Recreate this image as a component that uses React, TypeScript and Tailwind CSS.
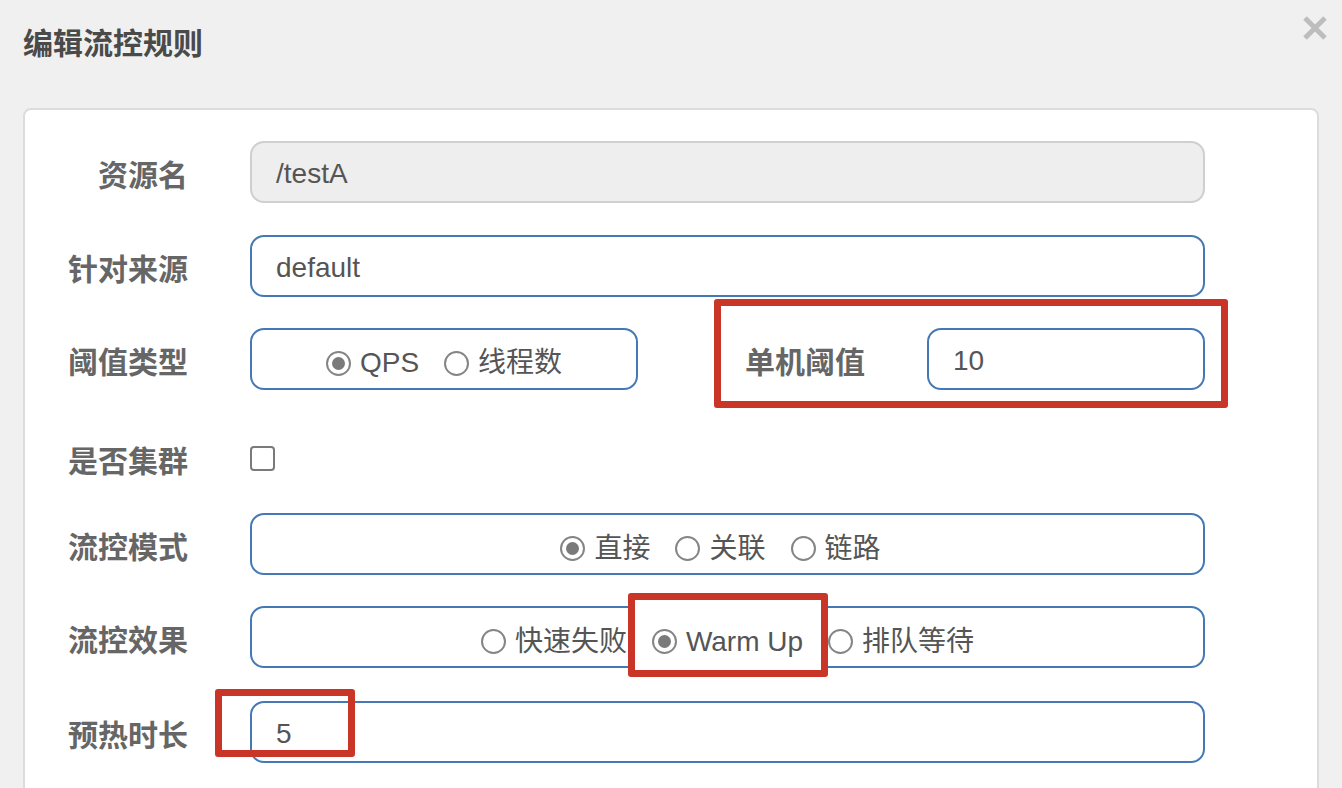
import React from "react";

const FONT = '"Liberation Sans", "Noto Sans CJK SC", sans-serif';

function Radio({ checked }: { checked?: boolean }) {
  return (
    <span className="flex h-[25px] w-[25px] shrink-0 items-center justify-center rounded-full border-2 border-[#858585] bg-white">
      {checked && <span className="h-[13px] w-[13px] rounded-full bg-[#7a7a7a]" />}
    </span>
  );
}

function RadioItem({ label, checked }: { label: string; checked?: boolean }) {
  return (
    <span className="flex items-center gap-[9px]">
      <Radio checked={checked} />
      <span className="text-[28px] leading-none text-[#555]">{label}</span>
    </span>
  );
}

function Label({ children }: { children: React.ReactNode }) {
  return (
    <div className="w-[163px] shrink-0 pt-[8px] text-right text-[30px] font-bold leading-none text-[#666]">
      {children}
    </div>
  );
}

const boxCls =
  "flex h-[62px] items-center rounded-[14px] border-2 border-[#4479b5] bg-white";

export default function App() {
  return (
    <div
      className="h-[788px] w-full overflow-hidden bg-[#f0f0f0]"
      style={{ fontFamily: FONT }}
    >
      <div className="flex items-start justify-between pl-[23px] pr-[14px]">
        <h1 className="pt-[26px] text-[30px] font-bold leading-[36px] text-[#4a4a4a]">
          编辑流控规则
        </h1>
        <svg width="26" height="26" viewBox="0 0 26 26" className="mt-[15px]">
          <path d="M3 3 L23 23 M23 3 L3 23" stroke="#bdbdbd" strokeWidth="5" />
        </svg>
      </div>

      <div className="relative ml-[23px] mt-[46px] w-[1296px] rounded-[8px] border-2 border-[#dcdcdc] bg-white pb-[60px] pr-[112px] pt-[31px]">
        {/* 资源名 */}
        <div className="flex items-center">
          <Label>资源名</Label>
          <div className="ml-[62px] flex h-[62px] flex-1 items-center rounded-[14px] border-2 border-[#cfcfcf] bg-[#eeeeee] pl-[24px] pt-[3px] text-[28px] text-[#555]">
            /testA
          </div>
        </div>

        {/* 针对来源 */}
        <div className="mt-[32px] flex items-center">
          <Label>针对来源</Label>
          <div className={`${boxCls} ml-[62px] flex-1 pl-[24px] pt-[4px] text-[28px] text-[#555]`}>
            default
          </div>
        </div>

        {/* 阈值类型 */}
        <div className="mt-[31px] flex items-center">
          <Label>阈值类型</Label>
          <div className={`${boxCls} ml-[62px] w-[388px] justify-center gap-[25px] pt-[8px]`}>
            <RadioItem label="QPS" checked />
            <RadioItem label="线程数" />
          </div>
          <div className="ml-[107px] w-[120px] shrink-0 pt-[8px] text-[30px] font-bold leading-none text-[#666]">
            单机阈值
          </div>
          <div className={`${boxCls} ml-[62px] flex-1 pl-[24px] pt-[4px] text-[28px] text-[#555]`}>
            10
          </div>
        </div>

        {/* 是否集群 */}
        <div className="mt-[37px] flex h-[62px] items-center">
          <Label>是否集群</Label>
          <span className="ml-[62px] h-[25px] w-[25px] rounded-[4px] border-2 border-[#7a7a7a] bg-white" />
        </div>

        {/* 流控模式 */}
        <div className="mt-[24px] flex items-center">
          <Label>流控模式</Label>
          <div className={`${boxCls} ml-[62px] flex-1 justify-center gap-[25px] pr-[14px] pt-[9px]`}>
            <RadioItem label="直接" checked />
            <RadioItem label="关联" />
            <RadioItem label="链路" />
          </div>
        </div>

        {/* 流控效果 */}
        <div className="mt-[31px] flex items-center">
          <Label>流控效果</Label>
          <div className={`${boxCls} ml-[62px] flex-1 justify-center gap-[25px] pt-[9px]`}>
            <RadioItem label="快速失败" />
            <span className="relative isolate flex h-[36px] items-center gap-[9px]">
              <span className="absolute -bottom-[17px] -left-[24px] -right-[25px] -top-[31px] -z-10 rounded-[3px] border-[7px] border-[#c93526] bg-white" />
              <Radio checked />
              <span className="text-[28px] leading-none text-[#555]">Warm Up</span>
            </span>
            <RadioItem label="排队等待" />
          </div>
        </div>

        {/* 预热时长 */}
        <div className="mt-[33px] flex items-center">
          <Label>预热时长</Label>
          <div className={`${boxCls} ml-[62px] flex-1 pl-[24px] pt-[4px] text-[28px] text-[#555]`}>
            5
          </div>
        </div>

        {/* highlight boxes */}
        <div className="pointer-events-none absolute left-[689px] top-[189px] h-[109px] w-[514px] rounded-[3px] border-[7px] border-[#c93526]" />
        <div className="pointer-events-none absolute left-[190px] top-[579px] h-[68px] w-[140px] rounded-[3px] border-[7px] border-[#c93526]" />
      </div>
    </div>
  );
}
